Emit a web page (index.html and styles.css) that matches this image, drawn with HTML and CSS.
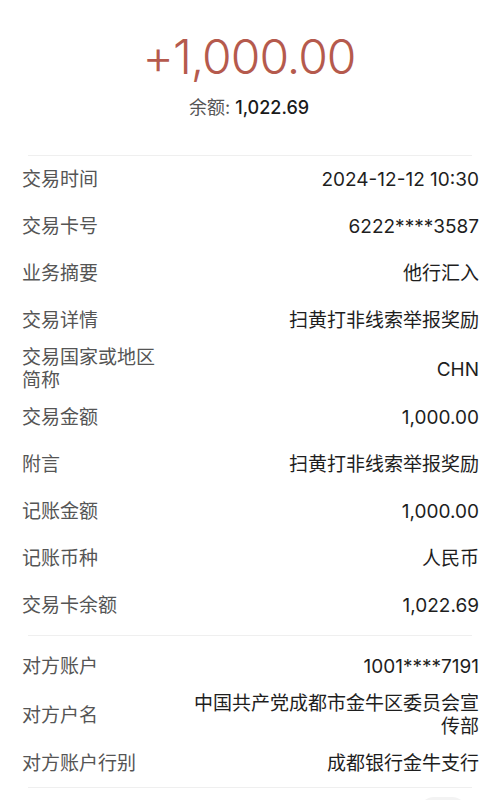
FILE: index.html
```html
<!DOCTYPE html>
<html lang="zh-CN">
<head>
    <meta charset="UTF-8">
    <meta name="viewport" content="width=device-width, initial-scale=1.0">
    <title>交易详情</title>
    <link rel="stylesheet" href="styles.css">
</head>
<body>
    <div class="summary">
        <div class="amount">+1,000.00</div>
        <div class="balance">余额: <span class="balance-num">1,022.69</span></div>
    </div>

    <div class="section">
        <div class="row"><span class="label">交易时间</span><span class="value">2024-12-12 10:30</span></div>
        <div class="row"><span class="label">交易卡号</span><span class="value">6222****3587</span></div>
        <div class="row"><span class="label">业务摘要</span><span class="value">他行汇入</span></div>
        <div class="row"><span class="label">交易详情</span><span class="value">扫黄打非线索举报奖励</span></div>
        <div class="row"><span class="label">交易国家或地区简称</span><span class="value">CHN</span></div>
        <div class="row"><span class="label">交易金额</span><span class="value">1,000.00</span></div>
        <div class="row"><span class="label">附言</span><span class="value">扫黄打非线索举报奖励</span></div>
        <div class="row"><span class="label">记账金额</span><span class="value">1,000.00</span></div>
        <div class="row"><span class="label">记账币种</span><span class="value">人民币</span></div>
        <div class="row"><span class="label">交易卡余额</span><span class="value">1,022.69</span></div>
    </div>

    <div class="section last">
        <div class="row"><span class="label">对方账户</span><span class="value">1001****7191</span></div>
        <div class="row"><span class="label">对方户名</span><span class="value">中国共产党成都市金牛区委员会宣传部</span></div>
        <div class="row"><span class="label">对方账户行别</span><span class="value">成都银行金牛支行</span></div>
    </div>

    <div class="footer">
        <div class="more-btn"></div>
    </div>
</body>
</html>
```

FILE: styles.css
```css
body {
    margin: 0;
    background-color: #fff;
    font-family: Inter, "Noto Sans CJK SC", sans-serif;
    color: #222;
    overflow: hidden;
}
.summary {
    padding-top: 29px;
    text-align: center;
}
.amount {
    font-size: 48px;
    line-height: 56px;
    font-weight: 300;
    letter-spacing: -1px;
    color: #b55a4d;
}
.balance {
    margin-top: 10px;
    font-size: 18px;
    line-height: 25px;
    color: #555;
}
.balance-num {
    color: #1a1a1a;
    font-weight: 500;
}
.section {
    border-top: 1px solid #efefef;
    margin: 0 26px 0 28px;
    padding-bottom: 6px;
}
.summary + .section {
    margin-top: 35px;
}
.section + .section {
    padding-top: 7px;
}
.section.last {
    padding-bottom: 0;
}
.row {
    display: flex;
    justify-content: space-between;
    align-items: center;
    box-sizing: border-box;
    min-height: 47px;
    padding: 2px 0;
    margin: 0 -7px 0 -6px;
    font-size: 19px;
    line-height: 23px;
}
.label {
    color: #555;
    max-width: 140px;
}
.value {
    color: #1e1e1e;
    text-align: right;
    max-width: 296px;
}
.footer {
    border-top: 1px solid #efefef;
    margin: 0 26px 0 28px;
    padding-top: 9px;
    display: flex;
    justify-content: flex-end;
}
.more-btn {
    width: 46px;
    height: 30px;
    border-radius: 14px;
    background-color: #f3f3f3;
    margin-right: 6px;
}
```
